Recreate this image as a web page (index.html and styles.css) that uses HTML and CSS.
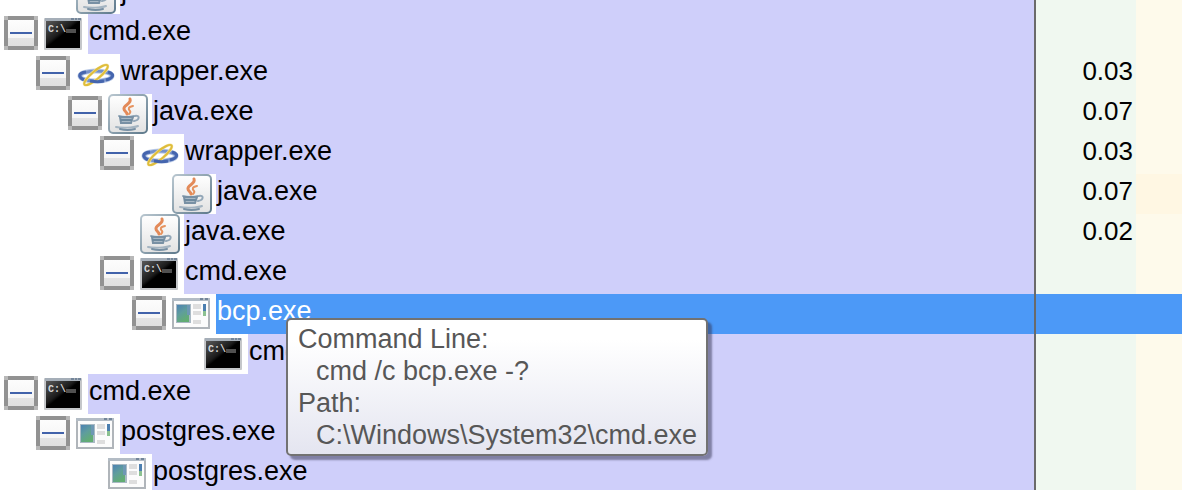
FILE: index.html
```html
<!DOCTYPE html>
<html lang="en">
<head>
<meta charset="utf-8">
<title>Process tree</title>
<link rel="stylesheet" href="styles.css">
</head>
<body>
<svg class="sprite" aria-hidden="true">
  <defs>
    <linearGradient id="gloss" x1="0" y1="0" x2="1" y2="1">
      <stop offset="0" stop-color="#5a5a5a"/><stop offset=".42" stop-color="#1c1c1c"/><stop offset=".5" stop-color="#000"/>
    </linearGradient>
    <linearGradient id="pane" x1="0" y1="0" x2=".5" y2="1">
      <stop offset="0" stop-color="#4c82b4"/><stop offset=".5" stop-color="#5f9d9d"/><stop offset="1" stop-color="#62ad73"/>
    </linearGradient>
    <linearGradient id="tile" x1="0" y1="0" x2="0" y2="1">
      <stop offset="0" stop-color="#fff"/><stop offset="1" stop-color="#e2e2e2"/>
    </linearGradient>
    <linearGradient id="edge" x1="0" y1="0" x2="1" y2="1">
      <stop offset="0" stop-color="#b8c6cf"/><stop offset="1" stop-color="#5f7a8c"/>
    </linearGradient>
  </defs>
  <symbol id="cmd" viewBox="0 0 40 40">
    <rect y="4" width="38" height="32" rx="1" fill="#c5c7ca"/>
    <path d="M1 4h36v3H1z" fill="#a5aeb8"/>
    <path d="M27 4h3v2h-3zM31 4h2v2h-2zM34 4h3v2h-3z" fill="#74869a"/>
    <path d="M2 7h34v27H2z" fill="url(#gloss)"/>
    <text x="4" y="18" class="prompt">C:\</text>
    <path d="M22 15h10v4H22z" fill="#505050"/>
  </symbol>
  <symbol id="app" viewBox="0 0 40 40">
    <rect x="1" y="5" width="36" height="29" fill="#fcfcfc" stroke="#b0b5ba" stroke-width="2"/>
    <path d="M0 4h38v3H0z" fill="#b3bcc5"/>
    <path d="M28 4h3v2h-3zM33 4h3v2h-3z" fill="#73869a"/>
    <path d="M4 10h15v19H4z" fill="#a9b9c4"/>
    <path d="M5 11h12v17H5z" fill="url(#pane)"/>
    <path d="M15 11h3v10h-3z" fill="#6d98b4"/>
    <path d="M21 10h8v5h-8zM21 17h8v4h-8zM21 26h8v4h-8z" fill="#dedede"/>
    <path d="M31 10h3v7h-3z" fill="#4c7fb0"/><path d="M31 17h3v5h-3z" fill="#8cc191"/>
  </symbol>
  <symbol id="wrapper" viewBox="0 0 40 40">
    <g fill="none">
      <ellipse cx="20" cy="22" rx="16" ry="5" stroke="#b9c9e6" stroke-width="5"/>
      <ellipse cx="20" cy="22" rx="16" ry="5" stroke="#7591ca" stroke-width="3"/>
      <path d="M10 18C2 19 2 23 8 26M32 18c7 2 6 6-2 8" stroke="#4565ae" stroke-width="3"/>
      <ellipse cx="20" cy="21" rx="15" ry="4" transform="rotate(-40 20 21)" stroke="#f3e4a3" stroke-width="3"/>
      <ellipse cx="20" cy="21" rx="15" ry="4" transform="rotate(-40 20 21)" stroke="#dfbd3b" stroke-width="2"/>
      <path d="M14 27c6 1 10 1 14 0" stroke="#4565ae" stroke-width="3"/>
    </g>
  </symbol>
  <symbol id="java" viewBox="0 0 40 40">
    <rect x="1" y="1" width="38" height="38" rx="4" fill="url(#tile)" stroke="url(#edge)" stroke-width="2"/>
    <g fill="none" stroke-linecap="round">
      <path d="M22 5c2 5-7 6-6 10 0 2 3 3 3 5" stroke="#e38a59" stroke-width="3"/>
      <path d="M25 12c-5 1-5 3-3 5 1 1 0 2-1 3" stroke="#e6935f" stroke-width="2"/>
      <path d="M11 22c4 1 11 1 15 0M27 22c5-1 5 4-1 5" stroke="#93a7b8" stroke-width="2"/>
      <path d="M12 23l1 6h10l2-6z" fill="#a8b8c5" stroke="#7890a4" stroke-width="2"/>
      <path d="M13 26h10" stroke="#6d899e" stroke-width="2"/>
      <path d="M8 33c5 1 17 1 22-1" stroke="#a4b4c1" stroke-width="2"/>
      <path d="M12 35c4 1 11 1 15 0" stroke="#7890a4" stroke-width="2"/>
    </g>
  </symbol>
</svg>

<main class="viewport">
<table class="processes" aria-label="Processes">
  <colgroup><col><col class="col-cpu"><col class="col-extra"></colgroup>
  <tbody>
    <tr>
      <td><div class="node depth-2"><span class="gutter"><svg class="icon"><use href="#java"/></svg></span><span class="name">java.exe</span></div></td>
      <td class="cpu"></td><td class="extra"></td>
    </tr>
    <tr>
      <td><div class="node depth-1"><span class="gutter"><button class="toggle" aria-label="Collapse cmd.exe"></button><svg class="icon"><use href="#cmd"/></svg></span><span class="name">cmd.exe</span></div></td>
      <td class="cpu"></td><td class="extra"></td>
    </tr>
    <tr>
      <td><div class="node depth-2"><span class="gutter"><button class="toggle" aria-label="Collapse wrapper.exe"></button><svg class="icon"><use href="#wrapper"/></svg></span><span class="name">wrapper.exe</span></div></td>
      <td class="cpu">0.03</td><td class="extra"></td>
    </tr>
    <tr>
      <td><div class="node depth-3"><span class="gutter"><button class="toggle" aria-label="Collapse java.exe"></button><svg class="icon"><use href="#java"/></svg></span><span class="name">java.exe</span></div></td>
      <td class="cpu">0.07</td><td class="extra"></td>
    </tr>
    <tr>
      <td><div class="node depth-4"><span class="gutter"><button class="toggle" aria-label="Collapse wrapper.exe"></button><svg class="icon"><use href="#wrapper"/></svg></span><span class="name">wrapper.exe</span></div></td>
      <td class="cpu">0.03</td><td class="extra"></td>
    </tr>
    <tr>
      <td><div class="node depth-5"><span class="gutter"><svg class="icon"><use href="#java"/></svg></span><span class="name">java.exe</span></div></td>
      <td class="cpu">0.07</td><td class="extra warm"></td>
    </tr>
    <tr>
      <td><div class="node depth-4"><span class="gutter"><svg class="icon"><use href="#java"/></svg></span><span class="name">java.exe</span></div></td>
      <td class="cpu">0.02</td><td class="extra"></td>
    </tr>
    <tr>
      <td><div class="node depth-4"><span class="gutter"><button class="toggle" aria-label="Collapse cmd.exe"></button><svg class="icon"><use href="#cmd"/></svg></span><span class="name">cmd.exe</span></div></td>
      <td class="cpu"></td><td class="extra"></td>
    </tr>
    <tr class="selected">
      <td><div class="node depth-5"><span class="gutter"><button class="toggle" aria-label="Collapse bcp.exe"></button><svg class="icon"><use href="#app"/></svg></span><span class="name" aria-describedby="details">bcp.exe</span>
        <dl class="tooltip" id="details" role="tooltip">
          <dt>Command Line:</dt><dd>cmd /c bcp.exe -?</dd>
          <dt>Path:</dt><dd>C:\Windows\System32\cmd.exe</dd>
        </dl></div></td>
      <td class="cpu"></td><td class="extra"></td>
    </tr>
    <tr>
      <td><div class="node depth-6"><span class="gutter"><svg class="icon"><use href="#cmd"/></svg></span><span class="name">cmd.exe</span></div></td>
      <td class="cpu"></td><td class="extra"></td>
    </tr>
    <tr>
      <td><div class="node depth-1"><span class="gutter"><button class="toggle" aria-label="Collapse cmd.exe"></button><svg class="icon"><use href="#cmd"/></svg></span><span class="name">cmd.exe</span></div></td>
      <td class="cpu"></td><td class="extra"></td>
    </tr>
    <tr>
      <td><div class="node depth-2"><span class="gutter"><button class="toggle" aria-label="Collapse postgres.exe"></button><svg class="icon"><use href="#app"/></svg></span><span class="name">postgres.exe</span></div></td>
      <td class="cpu"></td><td class="extra"></td>
    </tr>
    <tr>
      <td><div class="node depth-3"><span class="gutter"><svg class="icon"><use href="#app"/></svg></span><span class="name">postgres.exe</span></div></td>
      <td class="cpu"></td><td class="extra"></td>
    </tr>
  </tbody>
</table>
</main>
</body>
</html>
```

FILE: styles.css
```css
* { box-sizing: border-box; }

body {
  margin: 0;
  background: #fff;
  color: #000;
  font-family: "Liberation Sans", Arial, sans-serif;
}

.sprite {
  position: absolute;
  width: 0;
  height: 0;
}

.prompt {
  fill: #d8d8d8;
  font: bold 10px "Liberation Mono", monospace;
}

/* The list is scrolled part of a row down. */
.viewport {
  height: 100vh;
  overflow: hidden;
}

.processes {
  width: 100%;
  margin-top: -26px;
  table-layout: fixed;
  border-collapse: separate;
  border-spacing: 0;
}

.col-cpu { width: 102px; }
.col-extra { width: 46px; }

td {
  height: 40px;
  padding: 0;
  vertical-align: top;
}

.cpu {
  padding-right: 3px;
  border-left: 2px solid #6a6a6a;
  background: #f0f8f0;
  font-size: 26px;
  line-height: 34px;
  text-align: right;
}

.extra { background: #fefaeb; }
.extra.warm { background: #fff7e3; }

.node {
  position: relative;
  display: flex;
  height: 40px;
}

.gutter {
  display: flex;
  flex: none;
  justify-content: flex-end;
  gap: 6px;
  padding-right: 4px;
}

.depth-1 .gutter { width: 88px; }
.depth-2 .gutter { width: 120px; }
.depth-3 .gutter { width: 152px; }
.depth-4 .gutter { width: 184px; }
.depth-5 .gutter { width: 216px; }
.depth-6 .gutter { width: 248px; }

.icon {
  flex: none;
  width: 40px;
  height: 40px;
}

/* Layers from the top: minus sign, face, four pale corners, frame. */
.toggle {
  flex: none;
  width: 34px;
  height: 34px;
  margin: 2px 0 0;
  padding: 0;
  border: 0;
  background:
    linear-gradient(#4162aa, #4162aa) center / 22px 2px no-repeat,
    linear-gradient(#fdfdfd 0, #f5f5f5 68%, #e4e4e4 69%, #e0e0e0 100%) center / 26px 26px no-repeat,
    linear-gradient(#b8b8b8, #b8b8b8) left top / 4px 4px no-repeat,
    linear-gradient(#b8b8b8, #b8b8b8) right top / 4px 4px no-repeat,
    linear-gradient(#b8b8b8, #b8b8b8) left bottom / 4px 4px no-repeat,
    linear-gradient(#b8b8b8, #b8b8b8) right bottom / 4px 4px no-repeat,
    #929292;
}

.name {
  flex: 1;
  padding-left: 1px;
  background: #cfcffa;
  font-size: 27px;
  line-height: 34px;
}

.selected .name,
.selected .cpu,
.selected .extra {
  background-color: #4c99f7;
  color: #fff;
}

.tooltip {
  position: absolute;
  z-index: 1;
  top: 24px;
  left: 286px;
  margin: 0;
  padding: 3px 9px 3px 10px;
  border: 2px solid #727272;
  border-radius: 5px;
  background: linear-gradient(#fff 15%, #e4e5f0);
  box-shadow: 4px 4px 2px rgba(50, 50, 80, 0.5);
  color: #575757;
  font-size: 27px;
  line-height: 32px;
  white-space: nowrap;
}

.tooltip dd { margin: 0 0 0 18px; }
```
